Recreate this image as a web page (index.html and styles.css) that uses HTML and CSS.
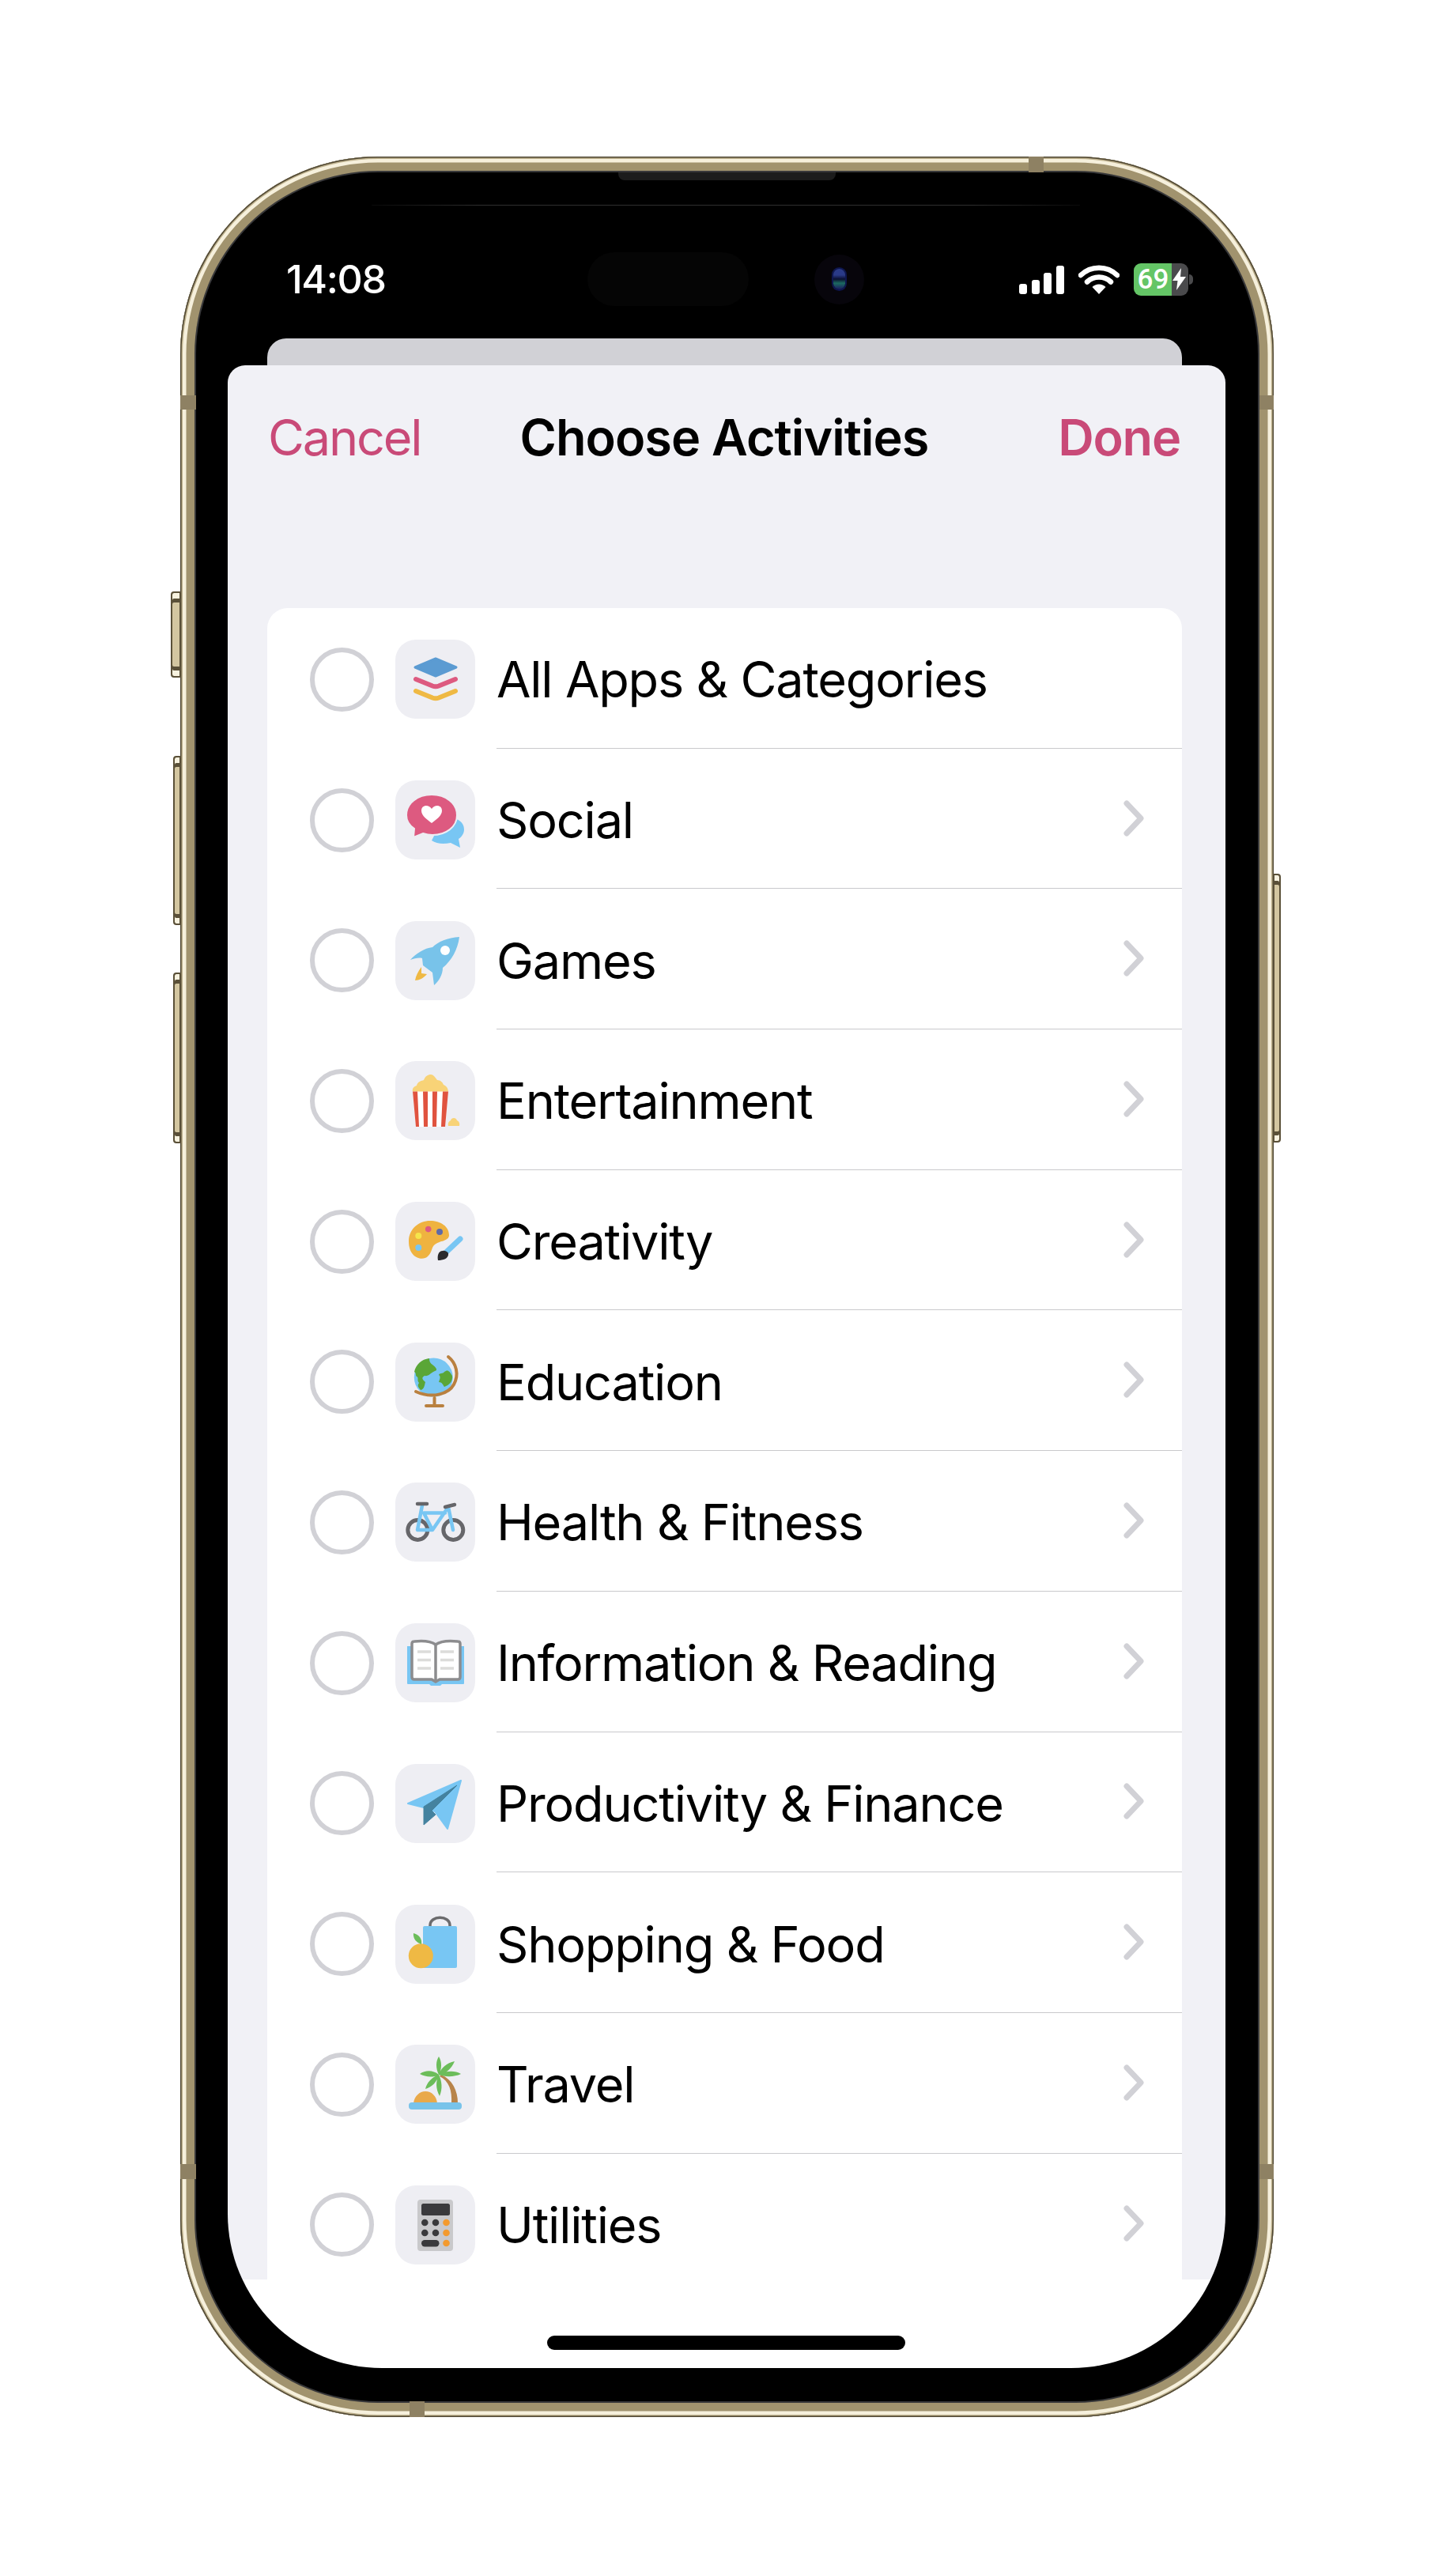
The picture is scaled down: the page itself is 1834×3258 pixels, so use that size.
FILE: index.html
```html
<!DOCTYPE html>
<html lang="en">
<head>
<meta charset="utf-8">
<title>Choose Activities</title>
<link rel="stylesheet" href="styles.css">
</head>
<body>
<main class="stage">
  <div class="device">
    <span class="btn btn-switch"></span><span class="btn btn-up"></span><span class="btn btn-down"></span><span class="btn btn-power"></span>
    <span class="band band-top"></span><span class="band band-bottom"></span><span class="band band-l1"></span><span class="band band-l2"></span><span class="band band-r1"></span><span class="band band-r2"></span>
    <span class="speaker"></span><span class="hairline"></span>

    <header class="status">
      <div class="time">14:08</div>
      <div class="island"></div>
      <div class="camera"><span class="lens"></span></div>
      <div class="signal"><i class="b1"></i><i class="b2"></i><i class="b3"></i><i class="b4"></i></div>
      <svg class="wifi" viewBox="0 0 52 37"><path d="M3 13A33 33 0 0 1 49 13M11 21.500A22 22 0 0 1 41 21.500" fill="none" stroke="#fff" stroke-width="6.500" stroke-linecap="round"/><path d="M17.500 28A12 12 0 0 1 34.500 28L26 37Z" fill="#fff"/></svg>
      <div class="battery">
        <div class="level">69</div>
        <div class="rest"><svg class="bolt" viewBox="0 0 18 28"><path d="M12 0 1 16h6.500L6 28 18 11h-7z" fill="#fff"/></svg></div>
      </div>
      <span class="nub"></span>
    </header>

    <div class="screen">
      <div class="peek"></div>
      <section class="sheet">
        <nav class="nav">
          <span class="cancel">Cancel</span>
          <h1 class="title">Choose Activities</h1>
          <span class="done">Done</span>
        </nav>
        <ul class="list">
          <li class="row">
            <span class="radio"></span>
            <span class="tile"><svg viewBox="0 0 101 100"><path d="M51 24 77 35 51 46 25 35Z" fill="#5b9bd2" stroke="#5b9bd2" stroke-width="3" stroke-linejoin="round"/><path d="M26 50 47 58.500Q51 60 55 58.500L76 50" fill="none" stroke="#dd5a80" stroke-width="6" stroke-linecap="round"/><path d="M26 65 47 73.500Q51 75 55 73.500L76 65" fill="none" stroke="#efb944" stroke-width="6" stroke-linecap="round"/></svg></span>
            <div class="row-main"><span class="label">All Apps &amp; Categories</span></div>
          </li>
          <li class="row">
            <span class="radio"></span>
            <span class="tile"><svg viewBox="0 0 101 100"><path d="M60 49C74 45 87 50 87 62 87 68 83 72 80 74L82 85 70 79C60 81 52 80 46 76Z" fill="#78c6f3"/><path d="M46 18C64 18 78 29 78 44 78 59 64 69 47 69 42 69 38 68 35 67L23 72 24 61C18 57 14 51 14 44 14 29 28 18 46 18Z" fill="#dd5a80" stroke="#eeeef3" stroke-width="2"/><path d="M46 54C41 50 33 45 33 38.500 33 31 42 30 46 36 50 30 59 31 59 38.500 59 45 51 50 46 54Z" fill="#fff"/></svg></span>
            <div class="row-main"><span class="label">Social</span><svg class="chev" viewBox="0 0 26 46"><path d="M4 4 22 23 4 42" fill="none" stroke="#d1d1d6" stroke-width="7" stroke-linecap="round" stroke-linejoin="round"/></svg></div>
          </li>
          <li class="row">
            <span class="radio"></span>
            <span class="tile"><svg viewBox="0 0 101 100"><path d="M81 20C66 21 54 26 47 33 37 34 26 41 19 49 24 47 30 46 34 47L35 56 47 65 49 81C55 76 60 68 60 59 71 50 79 36 81 20Z" fill="#78c3ea"/><ellipse cx="63" cy="37" rx="6" ry="6" fill="#fff"/><path d="M33 58C29 63 26 69 25 75 30 75 36 72 40 67L33 66Z" fill="#efb944"/></svg></span>
            <div class="row-main"><span class="label">Games</span><svg class="chev" viewBox="0 0 26 46"><path d="M4 4 22 23 4 42" fill="none" stroke="#d1d1d6" stroke-width="7" stroke-linecap="round" stroke-linejoin="round"/></svg></div>
          </li>
          <li class="row">
            <span class="radio"></span>
            <span class="tile"><svg viewBox="0 0 101 100"><path d="M22 39C21 34 24 32 27 31 28 26 33 25 36 24 38 19 41 17 45 17 48 17 50 20 53 24 57 24 60 27 61 30 64 31 67 34 67 39Z" fill="#f8d377"/><path d="M22 38.500H67L63 83H26Z" fill="#fff"/><path d="M22 38.500H28L30 83H26ZM35 38.500H41V83H36ZM47 38.500H53L52 83H47ZM60 38.500H67L63 83H58Z" fill="#e0533f"/><path d="M67 82C66 77 69 76 70 75 71 71 77 71 78 75 80 76 82 78 81 82Z" fill="#f8d377"/></svg></span>
            <div class="row-main"><span class="label">Entertainment</span><svg class="chev" viewBox="0 0 26 46"><path d="M4 4 22 23 4 42" fill="none" stroke="#d1d1d6" stroke-width="7" stroke-linecap="round" stroke-linejoin="round"/></svg></div>
          </li>
          <li class="row">
            <span class="radio"></span>
            <span class="tile"><svg viewBox="0 0 101 100"><path d="M17 50C17 34 30 24 44 24 57 24 68 31 68 42 68 50 56 49 50 54 45 58 47 64 41 69 35 75 17 72 17 50Z" fill="#efb340"/><circle cx="29.300" cy="43" r="4" fill="#f5e54b"/><circle cx="41.700" cy="34.600" r="3.800" fill="#dd5a80"/><circle cx="56" cy="38" r="4" fill="#5e6aa8"/><circle cx="29.300" cy="58" r="4" fill="#78c6f3"/><path d="M65 63 82 47" stroke="#78c6f3" stroke-width="7" stroke-linecap="round"/><path d="M60 62C54 62 53 69 54 74 60 74 68 72 67 65 66 63 62 61 60 62Z" fill="#2b2b2d"/></svg></span>
            <div class="row-main"><span class="label">Creativity</span><svg class="chev" viewBox="0 0 26 46"><path d="M4 4 22 23 4 42" fill="none" stroke="#d1d1d6" stroke-width="7" stroke-linecap="round" stroke-linejoin="round"/></svg></div>
          </li>
          <li class="row">
            <span class="radio"></span>
            <span class="tile"><svg viewBox="0 0 101 100"><circle cx="48.300" cy="44" r="24.500" fill="#78c6f3"/><path d="M43 20C33 21 26 28 24 37 27 39 25 41 27 43 30 44 27 48 30 51 27 55 30 57 32 60 37 59 37 53 38 50 35 47 32 45 37 42 42 43 44 39 50 36 55 35 50 30 47 28 44 26 43 24 43 20Z" fill="#5aa637"/><path d="M72 42C68 35 66 34 62 37 60 40 56 38 55 41 58 43 56 47 55 50 59 50 60 53 62 56 68 54 73 49 72 42Z" fill="#5aa637"/><path d="M67 18C77 26 81 40 74 53 68 64 48 72 26 62" fill="none" stroke="#b9803f" stroke-width="4" stroke-linecap="round"/><path d="M49.500 70V79M39 80H60" stroke="#b9803f" stroke-width="4" stroke-linecap="round"/></svg></span>
            <div class="row-main"><span class="label">Education</span><svg class="chev" viewBox="0 0 26 46"><path d="M4 4 22 23 4 42" fill="none" stroke="#d1d1d6" stroke-width="7" stroke-linecap="round" stroke-linejoin="round"/></svg></div>
          </li>
          <li class="row">
            <span class="radio"></span>
            <span class="tile"><svg viewBox="0 0 101 100"><circle cx="28.300" cy="60" r="12.500" fill="none" stroke="#66666a" stroke-width="5"/><circle cx="73.300" cy="60" r="12.500" fill="none" stroke="#66666a" stroke-width="5"/><path d="M34 29 28 60H47L67 31 73 60M36 38.500H63M36 38.500 47 60" fill="none" stroke="#78c6f3" stroke-width="4.500" stroke-linecap="round" stroke-linejoin="round"/><path d="M28 27H40M63 31 75 28" stroke="#66666a" stroke-width="4.500" stroke-linecap="round"/></svg></span>
            <div class="row-main"><span class="label">Health &amp; Fitness</span><svg class="chev" viewBox="0 0 26 46"><path d="M4 4 22 23 4 42" fill="none" stroke="#d1d1d6" stroke-width="7" stroke-linecap="round" stroke-linejoin="round"/></svg></div>
          </li>
          <li class="row">
            <span class="radio"></span>
            <span class="tile"><svg viewBox="0 0 101 100"><path d="M15 29H87V76Q87 77 86 77H59L57 79H45L43 77H16Q15 77 15 76Z" fill="#78c6f3"/><path d="M51 27C44 22 33 22 24 23 22 23 21 24 21 26V68C21 70 22 71 24 71H46L51 74 56 71H79C81 71 82 70 82 68V26C82 24 81 23 79 23 70 22 58 22 51 27Z" fill="#fff" stroke="#8c8c8e" stroke-width="3.500" stroke-linejoin="round"/><path d="M51 27V73" stroke="#8c8c8e" stroke-width="3.500"/><path d="M28 36H45M28 46.500H45M28 57H45M57 36H74M57 46.500H74M57 57H74" stroke="#dcdcda" stroke-width="3.500"/></svg></span>
            <div class="row-main"><span class="label">Information &amp; Reading</span><svg class="chev" viewBox="0 0 26 46"><path d="M4 4 22 23 4 42" fill="none" stroke="#d1d1d6" stroke-width="7" stroke-linecap="round" stroke-linejoin="round"/></svg></div>
          </li>
          <li class="row">
            <span class="radio"></span>
            <span class="tile"><svg viewBox="0 0 101 100"><path d="M83 21 16 50 36 55 50 60 66 82Z" fill="#78c6f3" stroke="#78c6f3" stroke-width="2" stroke-linejoin="round"/><path d="M78 27 36 54V77L51 64 46 59Z" fill="#44829f" stroke="#44829f" stroke-width="1" stroke-linejoin="round"/></svg></span>
            <div class="row-main"><span class="label">Productivity &amp; Finance</span><svg class="chev" viewBox="0 0 26 46"><path d="M4 4 22 23 4 42" fill="none" stroke="#d1d1d6" stroke-width="7" stroke-linecap="round" stroke-linejoin="round"/></svg></div>
          </li>
          <li class="row">
            <span class="radio"></span>
            <span class="tile"><svg viewBox="0 0 101 100"><path d="M44 28V26C44 13 69 13 69 26V28" fill="none" stroke="#6b6b6d" stroke-width="3.500"/><rect x="35" y="27" width="43" height="53" rx="2" fill="#78c6f3"/><circle cx="32.300" cy="64.700" r="15.500" fill="#efb944"/><path d="M23 36C31 38 34 44 33 50 27 48 22 43 23 36Z" fill="#6cbd5a"/></svg></span>
            <div class="row-main"><span class="label">Shopping &amp; Food</span><svg class="chev" viewBox="0 0 26 46"><path d="M4 4 22 23 4 42" fill="none" stroke="#d1d1d6" stroke-width="7" stroke-linecap="round" stroke-linejoin="round"/></svg></div>
          </li>
          <li class="row">
            <span class="radio"></span>
            <span class="tile"><svg viewBox="0 0 101 100"><path d="M23 74C24 65 31 59 38 59 46 59 52 65 53 74Z" fill="#e9a94a"/><path d="M56 40C68 46 72 58 71 74H79C79 58 72 44 58 38Z" fill="#b8844a"/><path d="M55 38C51 30 51 21 55 15 59 21 59 31 55 38ZM55 38C58 29 65 23 75 21 71 31 63 37 55 38ZM55 38C63 33 75 32 83 37 75 41 63 41 55 38ZM55 38C48 32 38 32 31 37 38 41 48 42 55 38ZM55 38C46 41 40 48 38 56 46 54 53 47 55 38ZM55 38C51 46 51 56 56 65 60 56 59 46 55 38Z" fill="#6cbd5a"/><rect x="17" y="73" width="67" height="9" rx="4" fill="#78c3ea"/></svg></span>
            <div class="row-main"><span class="label">Travel</span><svg class="chev" viewBox="0 0 26 46"><path d="M4 4 22 23 4 42" fill="none" stroke="#d1d1d6" stroke-width="7" stroke-linecap="round" stroke-linejoin="round"/></svg></div>
          </li>
          <li class="row">
            <span class="radio"></span>
            <span class="tile"><svg viewBox="0 0 101 100"><rect x="28" y="18" width="45" height="65" rx="4" fill="#c9c9cb"/><rect x="33" y="23" width="36" height="15" rx="2.500" fill="#3a3a3c"/><g fill="#3a3a3c"><circle cx="37.300" cy="47" r="4.300"/><circle cx="51" cy="47" r="4.300"/><circle cx="37.300" cy="60" r="4.300"/><circle cx="51" cy="60" r="4.300"/><rect x="33" y="69" width="22.500" height="8.500" rx="4.200"/></g><g fill="#f39a2d"><circle cx="64.500" cy="47" r="4.300"/><circle cx="64.500" cy="60" r="4.300"/><circle cx="64.500" cy="73" r="4.300"/></g></svg></span>
            <div class="row-main last"><span class="label">Utilities</span><svg class="chev" viewBox="0 0 26 46"><path d="M4 4 22 23 4 42" fill="none" stroke="#d1d1d6" stroke-width="7" stroke-linecap="round" stroke-linejoin="round"/></svg></div>
          </li>
        </ul>
      </section>
      <div class="home-area"><span class="home-bar"></span></div>
    </div>
  </div>
</main>
</body>
</html>
```
FILE: styles.css
```css
* { box-sizing: border-box; }
html, body { margin: 0; padding: 0; background: #fff; }
body { font-family: Inter, "Liberation Sans", sans-serif; color: #000; }
.stage { padding: 198px 0 201px 228px; width: 1834px; height: 3258px; }

.device {
  position: relative;
  width: 1383px;
  height: 2859px;
  padding: 0 61px 62px 60px;
  background: #000;
  border-radius: 250px;
  box-shadow:
    inset 0 0 0 1.5px #4f4733,
    inset 0 0 0 3px #bdb08c,
    inset 0 0 0 7.500px #f6f0dc,
    inset 0 0 0 18px #a1936e,
    inset 0 0 0 20px #38383a;
}

.btn { position: absolute; background: #d3c6a0; border: 2px solid #5a5038; box-shadow: inset 0 7px 0 #f7f2df, inset 0 -7px 0 #f7f2df, inset 0 12px 0 #5a5038, inset 0 -12px 0 #5a5038; }
.btn-switch { left: -12px; top: 550px; width: 13px; height: 109px; border-radius: 4px 0 0 4px; }
.btn-up { left: -9px; top: 758px; width: 10px; height: 214px; border-radius: 4px 0 0 4px; }
.btn-down { left: -9px; top: 1032px; width: 10px; height: 216px; border-radius: 4px 0 0 4px; }
.btn-power { right: -9px; top: 907px; width: 10px; height: 340px; border-radius: 0 4px 4px 0; }

.band { position: absolute; background: #8e8163; }
.band-top { left: 1073px; top: 0; width: 19px; height: 20px; }
.band-bottom { left: 290px; bottom: 0; width: 19px; height: 20px; }
.band-l1 { left: 0; top: 302px; width: 20px; height: 18px; }
.band-l2 { left: 0; top: 2539px; width: 20px; height: 19px; }
.band-r1 { right: 0; top: 302px; width: 18px; height: 18px; }
.band-r2 { right: 0; top: 2539px; width: 18px; height: 19px; }

.speaker { position: absolute; left: 554px; top: 20px; width: 275px; height: 10px; background: #1c1c1c; border-radius: 0 0 8px 8px; }
.hairline { position: absolute; left: 242px; top: 61px; width: 896px; height: 1px; background: linear-gradient(90deg, #0a0a0a, #2e2e2e 15%, #2e2e2e 85%, #0a0a0a); }

.status { display: flex; align-items: center; height: 230px; padding: 80px 0 0 74px; color: #fff; }
.time { width: 381px; font-size: 50px; font-weight: 500; letter-spacing: -1.4px; line-height: 1; }
.island { width: 204px; height: 68px; background: #050505; border-radius: 34px; }
.camera { display: flex; align-items: center; justify-content: center; width: 63px; height: 63px; margin-left: 83px; border-radius: 50%; background: #07050b; }
.lens { width: 15px; height: 26px; border-radius: 8px; background: linear-gradient(#2a3a88 0 30%, #0a0f30 50%, #1c6a60 70%, #1a1a60); box-shadow: 0 0 0 2px #0e1650; }
.signal { display: flex; align-items: flex-end; gap: 5.500px; height: 37px; margin-left: 196px; }
.signal i { display: block; width: 10px; background: #fff; border-radius: 3px; }
.b1 { height: 13px; } .b2 { height: 18px; } .b3 { height: 27px; } .b4 { height: 36px; }
.wifi { width: 52px; height: 37px; margin-left: 18px; }
.battery { display: flex; width: 69px; height: 41px; margin-left: 18px; border-radius: 9px; overflow: hidden; }
.level { width: 48px; padding-left: 5px; background: #64c566; color: #fff; font-family: Roboto, sans-serif; font-size: 35px; font-weight: 500; letter-spacing: 0; line-height: 41px; white-space: nowrap; }
.rest { display: flex; align-items: center; width: 21px; background: #4a4a4c; }
.bolt { width: 18px; height: 28px; }
.nub { width: 5px; height: 13px; margin-left: 1px; background: #4a4a4c; border-radius: 0 6px 6px 0; }

.screen { height: 2567px; border-radius: 0 0 195px 195px; overflow: hidden; }
.peek { height: 34px; margin: 0 55px 0 50px; background: #d1d1d6; border-radius: 24px 24px 0 0; }
.sheet { height: 2421px; padding: 0 55px 0 50px; background: #f1f1f6; border-radius: 22px 22px 0 0; overflow: hidden; }
.nav { display: grid; grid-template-columns: 1fr auto 1fr; align-items: center; height: 307px; padding: 0 2px 125px 1px; font-size: 63px; }
.cancel { color: #c94a78; letter-spacing: -2.200px; }
.title { margin: 0; font-size: 63px; font-weight: 600; letter-spacing: -1px; }
.done { color: #c94a78; font-weight: 600; text-align: right; letter-spacing: -1.2px; }

.list { margin: 0; padding: 0; list-style: none; background: #fff; border-radius: 26px 26px 0 0; }
.row { display: flex; align-items: center; height: 177.700px; padding-left: 54px; }
.radio { flex: none; width: 81px; height: 81px; margin-top: 3px; border: 6.500px solid #d1d1d6; border-radius: 50%; }
.tile { flex: none; width: 101px; height: 100px; margin: 3px 27px 0; background: #eeeef3; border-radius: 26px; }
.tile svg { display: block; width: 101px; height: 100px; }
.row-main { display: flex; flex: 1; align-items: center; justify-content: space-between; align-self: stretch; padding: 5px 48px 0 0; border-bottom: 1.500px solid #c9c9cc; }
.row-main.last { border-bottom: 0; }
.label { font-size: 63px; letter-spacing: -1.200px; line-height: 1; white-space: nowrap; }
.chev { flex: none; width: 26px; height: 46px; margin-top: -6px; }

.home-area { display: flex; justify-content: center; height: 112px; padding-top: 71px; background: #fff; }
.home-bar { width: 453px; height: 18px; background: #000; border-radius: 9px; margin-left: -2px; }
```
